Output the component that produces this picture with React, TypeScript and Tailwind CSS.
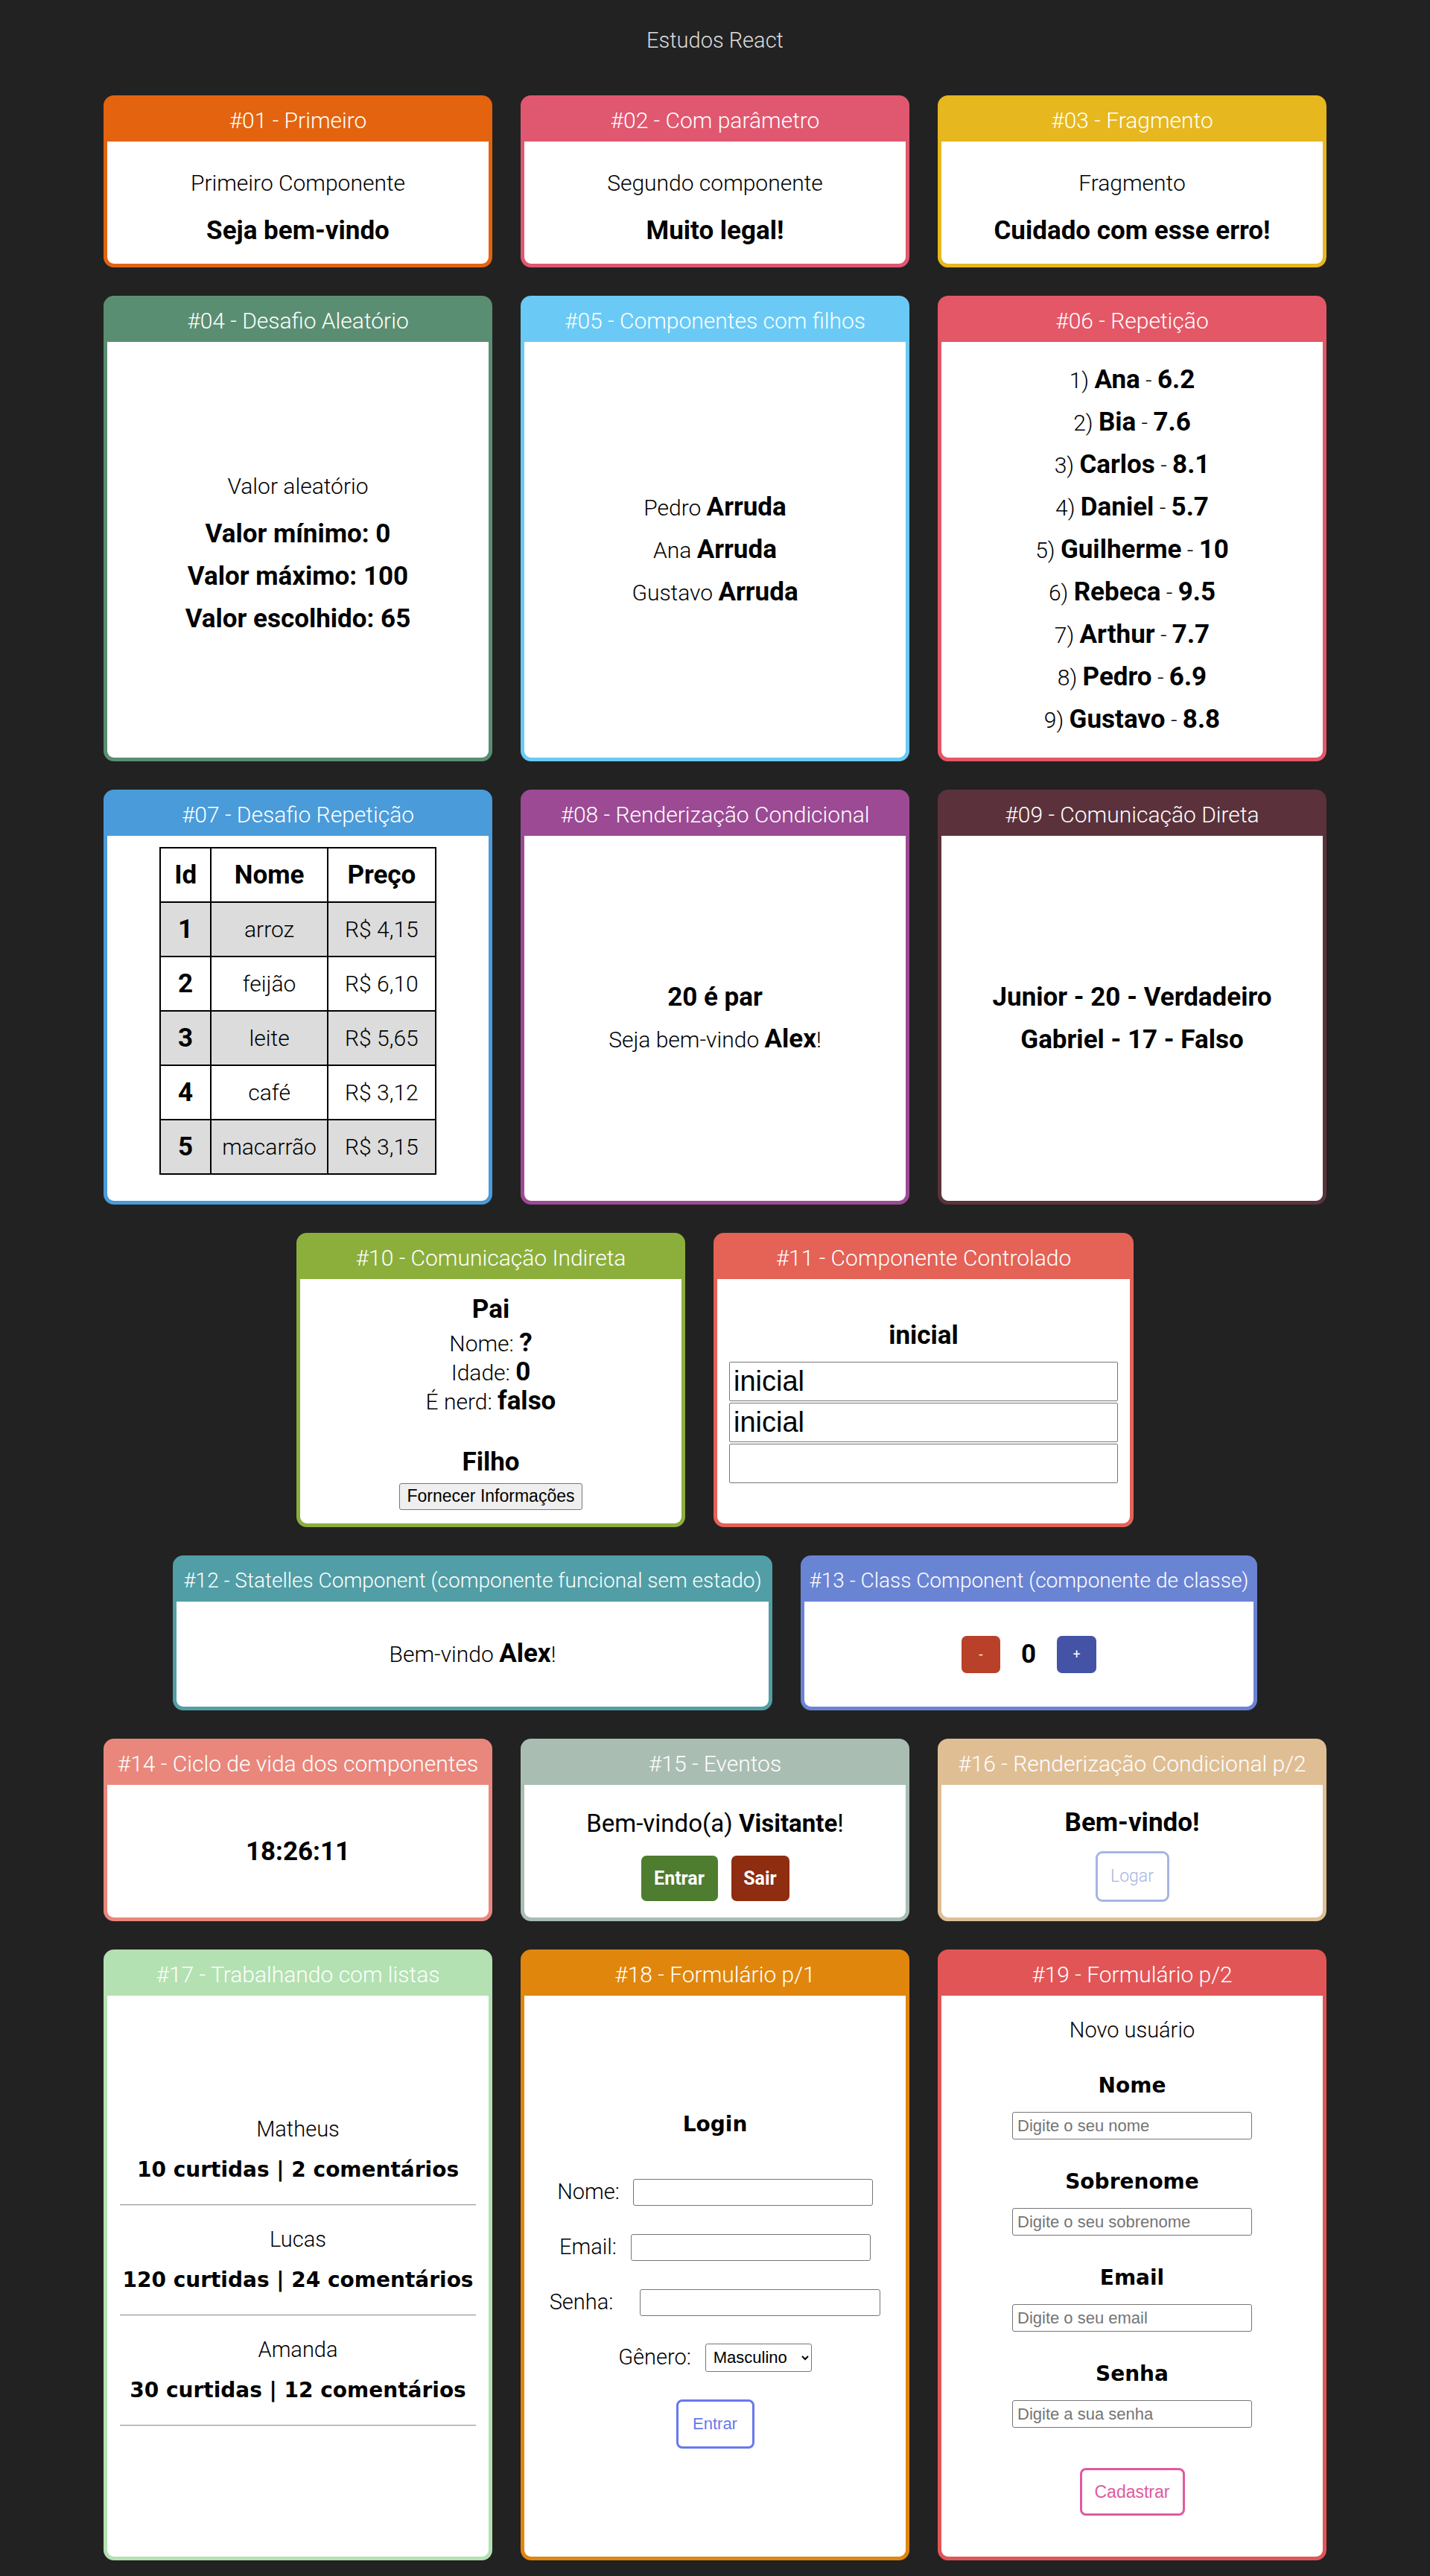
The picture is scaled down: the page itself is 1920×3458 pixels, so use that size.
import React from "react";

type CardProps = {
  title: string;
  tone: string;
  w?: string;
  h: string;
  head?: string;
  body?: string;
  children: React.ReactNode;
};

function Card({ title, tone, w = "w-[522px]", h, head = "", body = "", children }: CardProps) {
  return (
    <div className={`m-[19px] flex flex-col rounded-[14px] border-[5px] ${tone} ${w} ${h}`}>
      <div
        className={`flex h-[57px] shrink-0 items-center justify-center whitespace-nowrap text-white ${
          head || "text-[30px] font-light"
        }`}
      >
        {title}
      </div>
      <div
        className={`flex flex-1 flex-col items-center justify-center rounded-b-[9px] bg-white text-center text-black ${body}`}
      >
        {children}
      </div>
    </div>
  );
}

const notas = [
  ["Ana", "6.2"],
  ["Bia", "7.6"],
  ["Carlos", "8.1"],
  ["Daniel", "5.7"],
  ["Guilherme", "10"],
  ["Rebeca", "9.5"],
  ["Arthur", "7.7"],
  ["Pedro", "6.9"],
  ["Gustavo", "8.8"],
];

const produtos = [
  [1, "arroz", "R$ 4,15"],
  [2, "feijão", "R$ 6,10"],
  [3, "leite", "R$ 5,65"],
  [4, "café", "R$ 3,12"],
  [5, "macarrão", "R$ 3,15"],
];

const posts = [
  ["Matheus", "10 curtidas | 2 comentários"],
  ["Lucas", "120 curtidas | 24 comentários"],
  ["Amanda", "30 curtidas | 12 comentários"],
];

// bold text is set larger: the light and bold faces of the original font differ a lot in width
const bold = "text-[35px] font-bold";
// inline bold inside a light line, so the line box keeps its height
const inl = "text-[35px] font-bold leading-none";

// row 7 uses different fonts than the rest of the page
const wideHead = "text-[30px] font-light";
const heavy = "font-['DejaVu_Sans',sans-serif] font-bold text-[28px]";
const thin = "font-light text-[29px]";
const arial = "font-['Liberation_Sans',Arial,sans-serif]";

export default function App() {
  return (
    <div className="min-h-[3458px] bg-[#222222] font-['Roboto',sans-serif] text-[30px] leading-[57px] font-light">
      <h1 className="flex h-[109px] items-center justify-center text-[29px] font-light text-[#dddddd]">
        Estudos React
      </h1>

      <div className="flex flex-wrap justify-center">
        <Card title="#01 - Primeiro" tone="border-[#e3630f] bg-[#e3630f]" h="h-[231px]">
          <div className="pt-[10px]">
            <div>Primeiro Componente</div>
            <div className={`mt-[7px] ${bold}`}>Seja bem-vindo</div>
          </div>
        </Card>

        <Card title="#02 - Com parâmetro" tone="border-[#e05770] bg-[#e05770]" h="h-[231px]">
          <div className="pt-[10px]">
            <div>Segundo componente</div>
            <div className={`mt-[7px] ${bold}`}>Muito legal!</div>
          </div>
        </Card>

        <Card title="#03 - Fragmento" tone="border-[#e6b71e] bg-[#e6b71e]" h="h-[231px]">
          <div className="pt-[10px]">
            <div>Fragmento</div>
            <div className={`mt-[7px] ${bold}`}>Cuidado com esse erro!</div>
          </div>
        </Card>

        <Card title="#04 - Desafio Aleatório" tone="border-[#5a8e72] bg-[#5a8e72]" h="h-[625px]" body="pt-[6px]">
          <div>Valor aleatório</div>
          <div className={`mt-[7px] ${bold}`}>Valor mínimo: 0</div>
          <div className={bold}>Valor máximo: 100</div>
          <div className={bold}>Valor escolhido: 65</div>
        </Card>

        <Card title="#05 - Componentes com filhos" tone="border-[#6acaf5] bg-[#6acaf5]" h="h-[625px]">
          {["Pedro", "Ana", "Gustavo"].map((n) => (
            <div key={n}>
              {n} <span className={inl}>Arruda</span>
            </div>
          ))}
        </Card>

        <Card title="#06 - Repetição" tone="border-[#e35767] bg-[#e35767]" h="h-[625px]">
          {notas.map(([nome, nota], i) => (
            <div key={nome}>
              {i + 1}) <span className={inl}>{nome}</span> - <span className={inl}>{nota}</span>
            </div>
          ))}
        </Card>

        <Card title="#07 - Desafio Repetição" tone="border-[#4a9bd9] bg-[#4a9bd9]" h="h-[557px]" body="pb-[20px]">
          <table className="w-[372px] border-collapse border-2 border-black whitespace-nowrap">
            <thead>
              <tr className={`h-[73px] ${bold}`}>
                <th className="w-[69px] border-2 border-black">Id</th>
                <th className="w-[157px] border-2 border-black">Nome</th>
                <th className="w-[146px] border-2 border-black">Preço</th>
              </tr>
            </thead>
            <tbody>
              {produtos.map(([id, nome, preco], i) => (
                <tr key={id} className={`h-[73px] ${i % 2 === 0 ? "bg-[#dcdcdc]" : "bg-white"}`}>
                  <td className={`border-2 border-black ${bold}`}>{id}</td>
                  <td className="border-2 border-black">{nome}</td>
                  <td className="border-2 border-black">{preco}</td>
                </tr>
              ))}
            </tbody>
          </table>
        </Card>

        <Card title="#08 - Renderização Condicional" tone="border-[#9c4a94] bg-[#9c4a94]" h="h-[557px]">
          <div className={bold}>20 é par</div>
          <div>
            Seja bem-vindo <span className={inl}>Alex</span>!
          </div>
        </Card>

        <Card title="#09 - Comunicação Direta" tone="border-[#5b323c] bg-[#5b323c]" h="h-[557px]">
          <div className={bold}>Junior - 20 - Verdadeiro</div>
          <div className={bold}>Gabriel - 17 - Falso</div>
        </Card>

        <Card title="#10 - Comunicação Indireta" tone="border-[#8caf3c] bg-[#8caf3c]" h="h-[395px]">
          <div className={`${bold} leading-[44px]`}>Pai</div>
          <div className="mt-[4px] leading-[39px]">
            <div>
              Nome: <span className={inl}>?</span>
            </div>
            <div>
              Idade: <span className={inl}>0</span>
            </div>
            <div>
              É nerd: <span className={inl}>falso</span>
            </div>
          </div>
          <div className={`mt-[40px] leading-[44px] ${bold}`}>Filho</div>
          <button
            className={`mt-[6px] h-[36px] rounded-[3px] border border-[#767676] bg-[#efefef] px-[10px] text-[23px] leading-none font-normal text-black ${arial}`}
          >
            Fornecer Informações
          </button>
        </Card>

        <Card title="#11 - Componente Controlado" tone="border-[#e46256] bg-[#e46256]" w="w-[564px]" h="h-[395px]">
          <div className={`${bold} leading-[44px]`}>inicial</div>
          <div className={`mt-[13px] flex flex-col gap-[2px] ${arial}`}>
            <input
              readOnly
              value="inicial"
              className="h-[53px] w-[522px] rounded-[2px] border border-[#767676] px-[5px] text-[38px] font-normal text-black"
            />
            <input
              readOnly
              value="inicial"
              className="h-[53px] w-[522px] rounded-[2px] border border-[#767676] px-[5px] text-[38px] font-normal text-black"
            />
            <input
              readOnly
              value=""
              className="h-[53px] w-[522px] rounded-[2px] border border-[#767676] px-[5px] text-[38px] font-normal text-black"
            />
          </div>
        </Card>

        <Card
          title="#12 - Statelles Component (componente funcional sem estado)"
          tone="border-[#519ea6] bg-[#519ea6]"
          w="w-[805px]"
          h="h-[208px]"
          head="text-[28px] font-light"
        >
          <div>
            Bem-vindo <span className={inl}>Alex</span>!
          </div>
        </Card>

        <Card
          title="#13 - Class Component (componente de classe)"
          tone="border-[#6a84d4] bg-[#6a84d4]"
          w="w-[613px]"
          h="h-[208px]"
          head="text-[28px] font-light"
        >
          <div className="flex items-center gap-[28px]">
            <button className="flex h-[50px] w-[52px] items-center justify-center rounded-[7px] bg-[#b94129] text-[18px] font-normal text-white">
              -
            </button>
            <span className={bold}>0</span>
            <button className="flex h-[50px] w-[53px] items-center justify-center rounded-[7px] bg-[#4453a6] text-[18px] font-normal text-white">
              +
            </button>
          </div>
        </Card>

        <Card title="#14 - Ciclo de vida dos componentes" tone="border-[#e9877c] bg-[#e9877c]" h="h-[245px]">
          <div className={bold}>18:26:11</div>
        </Card>

        <Card title="#15 - Eventos" tone="border-[#a9bdb3] bg-[#a9bdb3]" h="h-[245px]">
          <div className="text-[33px] font-normal">
            Bem-vindo(a) <span className="font-bold">Visitante</span>!
          </div>
          <div className="mt-[15px] flex gap-[18px]">
            <button className="h-[61px] w-[103px] rounded-[7px] bg-[#4f7d2f] text-[25px] font-bold text-white">
              Entrar
            </button>
            <button className="h-[61px] w-[78px] rounded-[7px] bg-[#8e2d10] text-[25px] font-bold text-white">
              Sair
            </button>
          </div>
        </Card>

        <Card title="#16 - Renderização Condicional p/2" tone="border-[#dfbe94] bg-[#dfbe94]" h="h-[245px]">
          <div className={bold}>Bem-vindo!</div>
          <button className="mt-[10px] h-[68px] w-[99px] rounded-[9px] border-[3px] border-[#a6b5e3] bg-white text-[23px] font-light text-[#a6b5e3]">
            Logar
          </button>
        </Card>

        <Card title="#17 - Trabalhando com listas" tone="border-[#b3e1b2] bg-[#b3e1b2]" h="h-[820px]" head={wideHead}>
          <div>
            {posts.map(([nome, info]) => (
              <div key={nome} className="mb-[21px] flex flex-col items-center">
                <div className={`${thin} leading-[48px]`}>{nome}</div>
                <div className={`${heavy} leading-[62px]`}>{info}</div>
                <div className="mt-[15px] h-0 w-[478px] border-t border-b border-t-[#9a9a9a] border-b-[#e6e6e6]" />
              </div>
            ))}
          </div>
        </Card>

        <Card title="#18 - Formulário p/1" tone="border-[#e0860d] bg-[#e0860d]" h="h-[820px]" head={wideHead}>
          <div className={`${heavy} leading-[54px]`}>Login</div>
          <div className="mt-[27px] flex h-[74px] items-center justify-center gap-[18px]">
            <span className={thin}>Nome:</span>
            <input className="h-[36px] w-[322px] rounded-[3px] border border-[#767676]" />
          </div>
          <div className="flex h-[74px] items-center justify-center gap-[19px]">
            <span className={thin}>Email:</span>
            <input className="h-[36px] w-[322px] rounded-[3px] border border-[#767676]" />
          </div>
          <div className="flex h-[74px] items-center justify-center gap-[36px]">
            <span className={thin}>Senha:</span>
            <input type="password" className="h-[36px] w-[323px] rounded-[3px] border border-[#767676]" />
          </div>
          <div className="flex h-[74px] items-center justify-center gap-[19px]">
            <span className={thin}>Gênero:</span>
            <select
              defaultValue="m"
              className={`h-[38px] w-[143px] rounded-[3px] border border-[#767676] bg-white px-[6px] text-[22px] font-normal text-black ${arial}`}
            >
              <option value="m">Masculino</option>
              <option value="f">Feminino</option>
            </select>
          </div>
          <button
            className={`mt-[19px] h-[66px] w-[105px] rounded-[8px] border-[3px] border-[#6878ee] bg-white text-[22px] font-normal leading-none text-[#6878ee] ${arial}`}
          >
            Entrar
          </button>
        </Card>

        <Card title="#19 - Formulário p/2" tone="border-[#e25556] bg-[#e25556]" h="h-[820px]" head={wideHead} body="pb-[34px]">
          <div className={`${thin} leading-[50px]`}>Novo usuário</div>
          {[
            ["Nome", "Digite o seu nome"],
            ["Sobrenome", "Digite o seu sobrenome"],
            ["Email", "Digite o seu email"],
            ["Senha", "Digite a sua senha"],
          ].map(([label, ph], i) => (
            <div key={label} className={`flex flex-col items-center ${i === 0 ? "mt-[28px]" : "mt-[35px]"}`}>
              <div className={`${heavy} leading-[44px]`}>{label}</div>
              <input
                placeholder={ph}
                className={`mt-[13px] h-[37px] w-[322px] rounded-[3px] border border-[#767676] px-[6px] text-[22px] font-normal text-black placeholder:text-[#757575] ${arial}`}
              />
            </div>
          ))}
          <button
            className={`mt-[54px] h-[64px] w-[141px] rounded-[8px] border-[3px] border-[#e05a9f] bg-white text-[23px] font-normal leading-none text-[#e05a9f] ${arial}`}
          >
            Cadastrar
          </button>
        </Card>
      </div>
    </div>
  );
}
